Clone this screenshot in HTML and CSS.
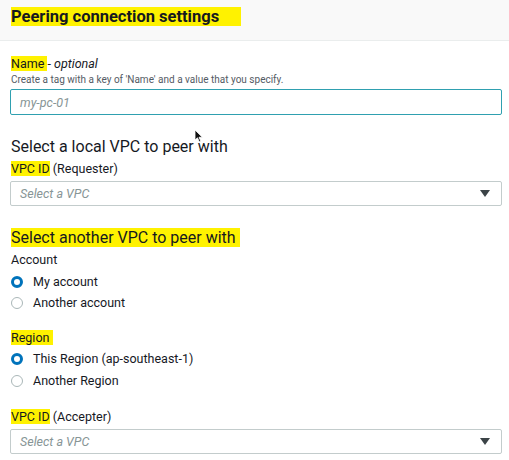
FILE: index.html
```html
<!DOCTYPE html>
<html>
<head>
<meta charset="utf-8">
<link rel="stylesheet" href="styles.css">
</head>
<body>
<div class="panel">
  <div class="header"><h1 class="title"><span class="hl">Peering connection settings</span></h1></div>
  <div class="content">
    <div class="field name-field">
      <div class="label"><span class="hl">Name </span>- <i>optional</i></div>
      <div class="desc">Create a tag with a key of 'Name' and a value that you specify.</div>
      <div class="input focused"><span class="ph">my-pc-01</span></div>
    </div>

    <h2 class="section">Select a local VPC to peer with</h2>
    <div class="field">
      <div class="label"><span class="hl">VPC ID</span> (Requester)</div>
      <div class="input select"><span class="ph">Select a VPC</span><span class="caret"></span></div>
    </div>

    <h2 class="section second"><span class="hl">Select another VPC to peer with</span></h2>
    <div class="field account">
      <div class="label">Account</div>
      <div class="radios">
        <div class="radio"><span class="dot on"></span>My account</div>
        <div class="radio"><span class="dot"></span>Another account</div>
      </div>
    </div>
    <div class="field region">
      <div class="label"><span class="hl">Region&nbsp;</span></div>
      <div class="radios">
        <div class="radio"><span class="dot on"></span>This Region (ap-southeast-1)</div>
        <div class="radio"><span class="dot"></span>Another Region</div>
      </div>
    </div>
    <div class="field accepter">
      <div class="label"><span class="hl">VPC ID</span> (Accepter)</div>
      <div class="input select"><span class="ph">Select a VPC</span><span class="caret"></span></div>
    </div>
  </div>
  <svg class="cursor" width="10" height="14" viewBox="0 0 10 14"><path d="M1 1 L1 11 L3.5 8.8 L5.3 12.8 L6.8 12.1 L5 8.3 L8.3 8.2 Z" fill="#111" stroke="#fff" stroke-width="0.8"/></svg>
</div>
</body>
</html>
```
FILE: styles.css
```css
html, body {
  margin: 0;
  padding: 0;
  background: #fff;
}
body {
  font-family: Roboto, "Open Sans", sans-serif;
  color: #16191f;
  width: 509px;
  height: 460px;
  overflow: hidden;
}
.panel {
  position: relative;
}
.header {
  height: 41px;
  background: #f9f9f9;
  border-bottom: 1px solid #eaeded;
  box-sizing: border-box;
  padding: 6px 0 0 11px;
}
.title {
  margin: 0;
  font-size: 16.5px;
  font-weight: 700;
  line-height: 22px;
}
.hl {
  background: #fff200;
}
.title .hl {
  padding-right: 22px;
}
.content {
  padding: 15px 7px 0 10px;
}
.field {
  display: flex;
  flex-direction: column;
}
.label {
  font-size: 12.5px;
  line-height: 16px;
  padding-left: 1px;
}
.label i {
  font-style: italic;
}
.desc {
  font-size: 10px;
  line-height: 14px;
  color: #545b64;
  padding-left: 1px;
  margin-top: 1px;
}
.input {
  height: 26px;
  box-sizing: border-box;
  border: 1px solid #aab7b8;
  border-radius: 2px;
  display: flex;
  align-items: center;
  padding-left: 9px;
}
.input.focused {
  border: 1.5px solid #2fa0b0;
  margin-top: 2px;
}
.ph {
  font-size: 12.5px;
  font-style: italic;
  color: #879596;
}
.select {
  height: 25px;
  justify-content: space-between;
  padding-right: 11px;
  border-color: #c3cccc;
  margin-top: 4px;
}
.caret {
  width: 0;
  height: 0;
  border-left: 5px solid transparent;
  border-right: 5px solid transparent;
  border-top: 7px solid #3b4347;
}
.section {
  margin: 21px 0 3px 1px;
  font-size: 16px;
  font-weight: 400;
  line-height: 22px;
}
.section.second {
  margin-top: 21px;
  margin-bottom: 1px;
}
.section.second .hl {
  padding-right: 4px;
}
.account {
  margin-top: 3px;
}
.radios {
  display: flex;
  flex-direction: column;
  margin-top: 3px;
}
.radio {
  display: flex;
  align-items: center;
  font-size: 12.5px;
  height: 21px;
  padding-left: 1px;
}
.dot {
  width: 12px;
  height: 12px;
  box-sizing: border-box;
  border-radius: 50%;
  border: 1px solid #aab7b8;
  margin-right: 10px;
  background: #fff;
}
.dot.on {
  border: 3.5px solid #0073bb;
}
.region {
  margin-top: 17px;
}
.region .radios {
  margin-top: 2px;
}
.region .radio + .radio {
  margin-top: 1px;
}
.accepter {
  margin-top: 18px;
}
.accepter .select {
  margin-top: 4px;
}
.cursor {
  position: absolute;
  left: 194px;
  top: 129px;
}
```
